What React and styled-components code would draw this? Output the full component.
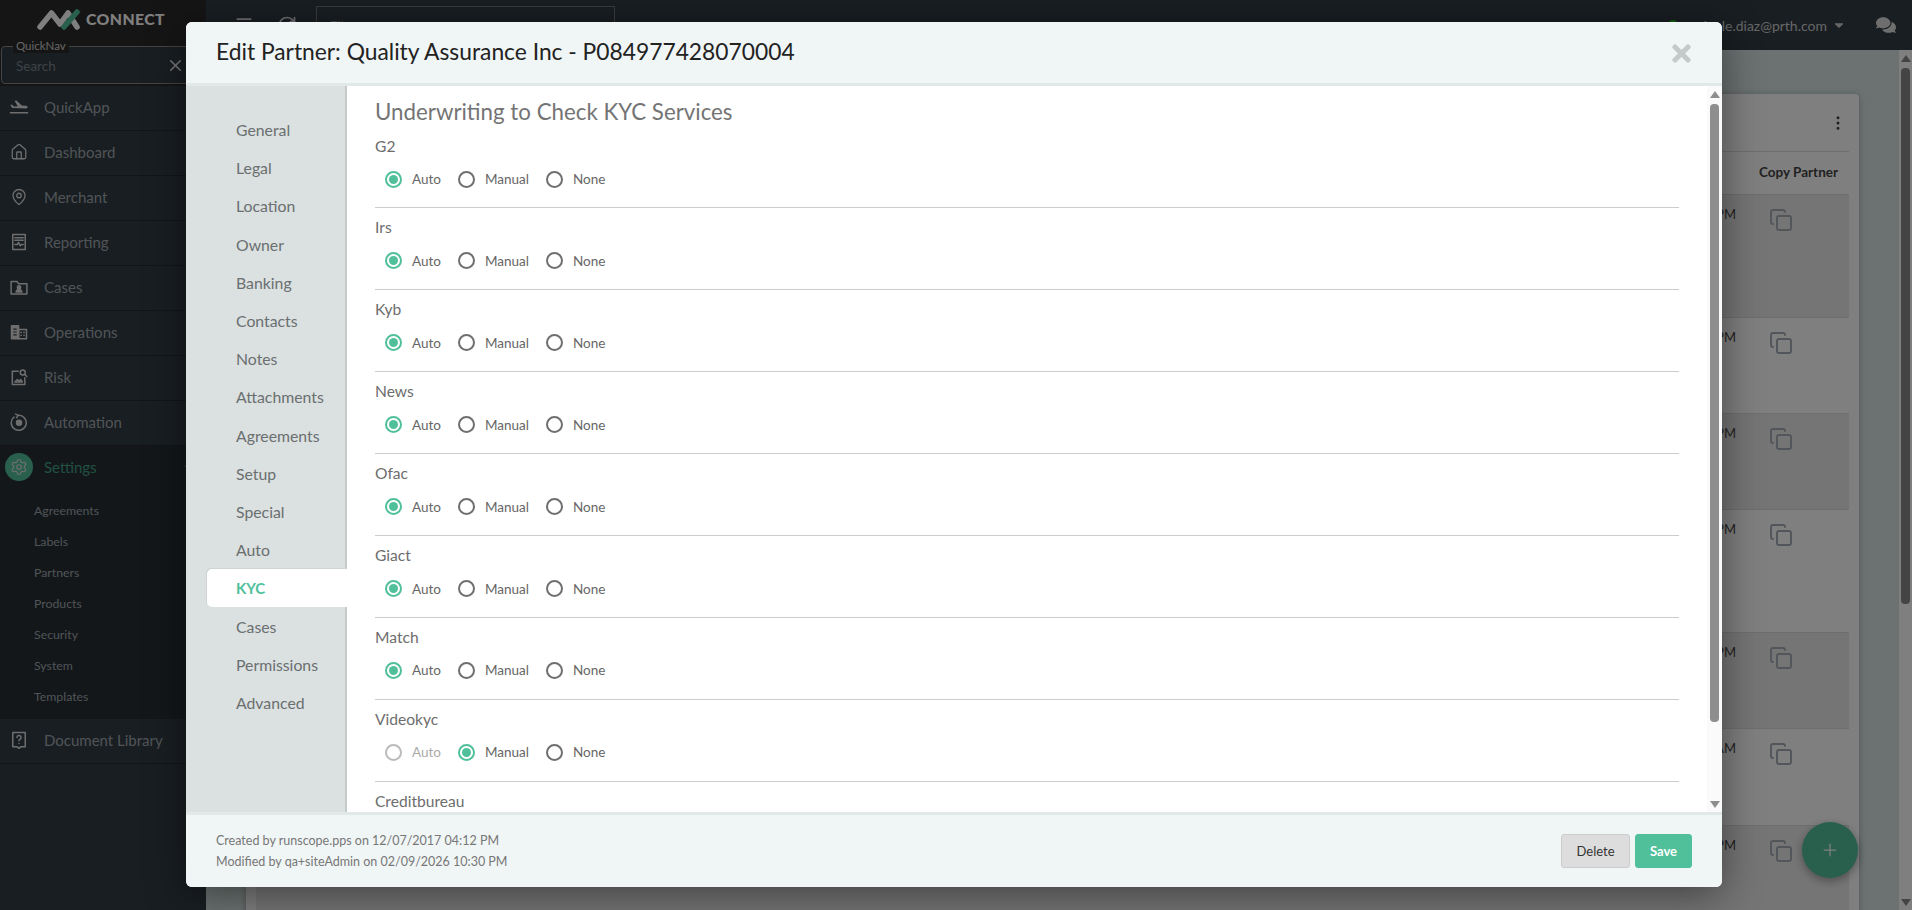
import React from 'react';
import styled, { createGlobalStyle } from 'styled-components';
import {
  Home, MapPin, Settings, ChevronLeft, ChevronDown, X, Copy, MoreVertical, Menu, RefreshCw, Plus,
} from 'lucide-react';
import { FaTimes, FaComments, FaCaretDown } from 'react-icons/fa';

const FONT = `"Lato", "Open Sans", "Liberation Sans", sans-serif`;

const Global = createGlobalStyle`
  html, body { margin: 0; padding: 0; height: 100%; overflow: hidden; }
  body { font-family: ${FONT}; background: #d6e4e2; }
  * { box-sizing: border-box; }
`;

const Page = styled.div`
  display: flex;
  width: 100%;
  height: 100vh;
  overflow: hidden;
  position: relative;
`;

/* ---------- sidebar ---------- */
const Sidebar = styled.aside`
  width: 206px;
  flex: none;
  background: #323c44;
  display: flex;
  flex-direction: column;
`;
const SideTop = styled.div`
  height: 86px;
  background: #2a2a2a;
  display: flex;
  flex-direction: column;
`;
const LogoRow = styled.div`
  height: 46px;
  padding: 9px 0 0 37px;
  display: flex;
  align-items: flex-start;
  gap: 6px;
`;
const LogoText = styled.span`
  font-size: 15.8px;
  font-weight: 900;
  color: #fff;
  letter-spacing: 0.4px;
  line-height: 22px;
  margin-top: -1px;
`;
const QuickNav = styled.div`
  position: relative;
  margin-left: 1px;
  height: 38px;
  border: 1px solid #888;
  border-radius: 4px;
  display: flex;
  align-items: center;
  justify-content: space-between;
  padding: 1px 6px 0 14px;
  background: #323c44;
`;
const QuickLabel = styled.span`
  position: absolute;
  top: -8px;
  left: 11px;
  padding: 0 3px;
  background: #2a2a2a;
  color: #ccc;
  font-size: 11.5px;
  line-height: 14px;
`;
const Placeholder = styled.span`
  font-size: 13.5px;
  color: #7c868c;
`;
const MenuRow = styled.div`
  height: 45px;
  flex: none;
  display: flex;
  align-items: center;
  padding-bottom: 2px;
  border-bottom: 1px solid ${p => (p.$open ? 'transparent' : '#262b30')};
  background: ${p => (p.$open ? '#262e34' : 'transparent')};
  position: relative;
`;
const IconSlot = styled.span`
  width: 44px;
  flex: none;
  display: flex;
  align-items: center;
  justify-content: center;
  padding-right: 6px;
  color: #ddd;
`;
const SettingsDisc = styled.span`
  width: 28px;
  height: 28px;
  border-radius: 50%;
  background: #50c09b;
  display: flex;
  align-items: center;
  justify-content: center;
  color: #ddd;
`;
const MenuText = styled.span`
  font-size: 15px;
  color: ${p => (p.$open ? '#44a083' : '#a0a8ae')};
`;
const Chevron = styled.span`
  margin-left: auto;
  width: 24px;
  display: flex;
  color: ${p => (p.$open ? '#44a083' : '#a0a8ae')};
`;
const SubList = styled.div`
  background: #262e34;
  height: 228px;
  padding-top: 4px;
  display: flex;
  flex-direction: column;
`;
const SubItem = styled.div`
  height: 31px;
  flex: none;
  display: flex;
  align-items: center;
  padding-left: 34px;
  font-size: 12.3px;
  color: #a0a8ae;
`;

/* ---------- main behind the dialog ---------- */
const Main = styled.div`
  flex: 1;
  min-width: 0;
  display: flex;
  flex-direction: column;
`;
const TopBar = styled.header`
  height: 50px;
  flex: none;
  background: #323c44;
  display: flex;
  align-items: flex-start;
  padding: 6px 16px 0 28px;
  color: #ddd;
`;
const TopIcon = styled.span`
  display: flex;
  margin: 9px ${p => p.$gap}px 0 0;
`;
const FilterBox = styled.div`
  width: 299px;
  height: 38px;
  border: 1px solid #777;
  padding: 11px 13px;
  font-size: 13px;
  color: #999;
`;
const UserArea = styled.div`
  margin-left: auto;
  display: flex;
  align-items: center;
  height: 38px;
  gap: 8px;
`;
const Presence = styled.span`
  width: 10px;
  height: 10px;
  border-radius: 50%;
  background: #1fc01f;
`;
const UserEmail = styled.span`
  font-size: 14px;
  color: #ccc;
  margin-right: -3px;
`;
const Below = styled.div`
  flex: 1;
  min-height: 0;
  display: flex;
`;
const Content = styled.main`
  flex: 1;
  min-width: 0;
  padding: 44px 40px 0;
  position: relative;
  overflow: hidden;
`;
const Card = styled.section`
  background: #fff;
  border-radius: 4px 4px 0 0;
  padding: 0 10px;
  height: 900px;
  box-shadow: 0 1px 6px rgba(0, 0, 0, 0.25);
`;
const CardHead = styled.div`
  height: 58px;
  border-bottom: 1px solid #ddd;
  display: flex;
  align-items: center;
  justify-content: flex-end;
  padding-right: 2px;
  color: #444;
`;
const TableHead = styled.div`
  height: 42px;
  display: flex;
  align-items: center;
  justify-content: flex-end;
  font-size: 13.5px;
  font-weight: 700;
  color: #444;
  padding: 0 11px 2px 0;
`;
const Row = styled.div`
  height: ${p => p.$h}px;
  background: ${p => (p.$shaded ? '#ebebeb' : '#fff')};
  border-top: 1px solid #ddd;
  display: flex;
  justify-content: flex-end;
`;
const DateCell = styled.div`
  padding-top: 11px;
  font-size: 13px;
  color: #444;
  line-height: 16px;
  margin-right: 23px;
`;
const CopyCell = styled.div`
  width: 90px;
  padding: 13px 0 0 10px;
  color: #a4acb6;
`;
const Fab = styled.button`
  position: absolute;
  right: 41px;
  bottom: 32px;
  width: 56px;
  height: 56px;
  border: 0;
  border-radius: 50%;
  background: #50c09b;
  color: #fff;
  display: flex;
  align-items: center;
  justify-content: center;
  box-shadow: 0 3px 10px rgba(0, 0, 0, 0.35);
`;

/* ---------- scrollbars ---------- */
const Track = styled.div`
  width: ${p => p.$w}px;
  flex: none;
  background: ${p => p.$bg};
  display: flex;
  flex-direction: column;
  align-items: center;
  padding: 5px 0 4px;
`;
const ArrowUp = styled.span`
  width: 0;
  height: 0;
  border-left: 5px solid transparent;
  border-right: 5px solid transparent;
  border-bottom: 7px solid ${p => p.$c};
`;
const ArrowDown = styled.span`
  margin-top: auto;
  width: 0;
  height: 0;
  border-left: 5px solid transparent;
  border-right: 5px solid transparent;
  border-top: 7px solid ${p => p.$c};
`;
const Thumb = styled.span`
  width: 9px;
  height: ${p => p.$h}px;
  margin-top: 6px;
  border-radius: 4px;
  background: ${p => p.$c};
`;

/* ---------- dialog ---------- */
const Backdrop = styled.div`
  position: absolute;
  inset: 0;
  background: rgba(0, 0, 0, 0.5);
`;
const DialogShadow = styled.div`
  position: absolute;
  left: 186px;
  top: 22px;
  width: 1536px;
  height: 865px;
  border-radius: 6px;
  box-shadow: 0 8px 40px rgba(0, 0, 0, 0.45);
`;
const Dialog = styled.div`
  position: absolute;
  left: 186px;
  top: 22px;
  width: 1536px;
  height: 865px;
  border-radius: 6px;
  overflow: hidden;
  background: #fff;
  display: flex;
  flex-direction: column;
`;
const DialogHead = styled.div`
  height: 64px;
  flex: none;
  background: #f0f5f5;
  border-bottom: 3px solid #e1e9e8;
  display: flex;
  align-items: center;
  justify-content: space-between;
  padding: 0 27px 3px 30px;
`;
const DialogTitle = styled.h1`
  margin: 0;
  font-size: 22.8px;
  font-weight: 400;
  color: #222;
`;
const CloseBtn = styled.span`
  display: flex;
  color: #c5c9c9;
  margin-top: 4px;
`;
const DialogBody = styled.div`
  flex: 1;
  min-height: 0;
  display: flex;
`;
const SideNav = styled.nav`
  width: 161px;
  flex: none;
  background: #dbe0e0;
  border-right: 2px solid #c5caca;
  padding-top: 24.5px;
  display: flex;
  flex-direction: column;
`;
const NavItem = styled.div`
  height: 38.2px;
  flex: none;
  display: flex;
  align-items: center;
  font-size: ${p => (p.$active ? '15px' : '15.8px')};
  padding-left: ${p => (p.$active ? '29px' : '50px')};
  margin-left: ${p => (p.$active ? '21px' : '0')};
  margin-right: ${p => (p.$active ? '-2px' : '0')};
  color: ${p => (p.$active ? '#50c09b' : '#6a6f70')};
  font-weight: ${p => (p.$active ? 700 : 400)};
  background: ${p => (p.$active ? '#fff' : 'transparent')};
  border-radius: ${p => (p.$active ? '5px 0 0 5px' : '0')};
  box-shadow: ${p => (p.$active ? '-1px -1px 0 #cfd4d4' : 'none')};
  position: relative;
`;
const Pane = styled.div`
  flex: 1;
  min-width: 0;
  overflow: hidden;
  padding: 10px 28px 0;
`;
const PaneTitle = styled.h2`
  margin: 0;
  height: 30.6px;
  font-size: 22.3px;
  line-height: 32px;
  font-weight: 400;
  color: #747474;
`;
const Service = styled.div`
  height: 81.9px;
  flex: none;
  border-bottom: 1px solid #ccc;
`;
const ServiceName = styled.div`
  height: 39px;
  line-height: 39px;
  font-size: 15.6px;
  color: #6d6d6d;
`;
const RadioLine = styled.div`
  display: flex;
  align-items: center;
  height: 27px;
  padding-left: 10px;
`;
const RadioOption = styled.label`
  display: flex;
  align-items: center;
  gap: 10px;
  margin-right: 17px;
  font-size: 13.5px;
  color: ${p => (p.$disabled ? '#aaa' : '#666')};
`;
const RadioMark = styled.span`
  width: 17px;
  height: 17px;
  border-radius: 50%;
  flex: none;
  display: flex;
  align-items: center;
  justify-content: center;
  border: 2px solid ${p => (p.$checked ? '#50c09b' : p.$disabled ? '#bbb' : '#6f6f6f')};
  &::after {
    content: '';
    width: 9px;
    height: 9px;
    border-radius: 50%;
    background: ${p => (p.$checked ? '#50c09b' : 'transparent')};
  }
`;
const DialogFoot = styled.div`
  height: 75px;
  flex: none;
  background: #f0f5f5;
  border-top: 3px solid #e1e9e8;
  display: flex;
  align-items: center;
  justify-content: space-between;
  padding: 0 30px;
`;
const Audit = styled.div`
  font-size: 12.5px;
  line-height: 21px;
  color: #777;
`;
const Buttons = styled.div`
  display: flex;
  gap: 5px;
`;
const Btn = styled.button`
  height: 34px;
  width: ${p => p.$w}px;
  border-radius: 3px;
  font-family: ${FONT};
  font-size: 13px;
  border: 1px solid ${p => (p.$primary ? '#50c09b' : '#ccc')};
  background: ${p => (p.$primary ? '#50c09b' : '#ddd')};
  color: ${p => (p.$primary ? '#fff' : '#333')};
  font-weight: ${p => (p.$primary ? 700 : 400)};
`;

/* ---------- drawn icons ---------- */
const Svg = ({ children, size = 20 }) => (
  <svg width={size} height={size} viewBox="0 0 24 24" fill="none" stroke="currentColor" strokeWidth="1.8" strokeLinecap="round" strokeLinejoin="round">
    {children}
  </svg>
);
const PlaneIcon = () => (
  <svg width="20" height="20" viewBox="0 0 24 24" fill="currentColor">
    <path d="M1.5 9.5l2-.6 2.6 2.4 4.3-.2L6.6 4.6l2.4-.4 6.4 6 5.2.4c1.2.1 1.9 1 1.8 1.8-.1.9-.9 1.4-2 1.3L3.8 13.2z" />
    <rect x="1" y="18" width="22" height="1.8" />
  </svg>
);
const ReportIcon = () => (
  <Svg>
    <rect x="4.5" y="3" width="15" height="18" />
    <path d="M7 7h10M7 10h10M7 15h3l1.5-2.5 2 4 1.5-1.5h2" />
  </Svg>
);
const CasesIcon = () => (
  <Svg>
    <path d="M2.5 5.5h7l2 2.5h10v12.5h-19z" />
    <circle cx="12" cy="12.5" r="2" fill="currentColor" />
    <path d="M8.5 18c.5-2 2-3 3.5-3s3 1 3.5 3z" fill="currentColor" />
  </Svg>
);
const OpsIcon = () => (
  <Svg>
    <rect x="3" y="4.5" width="8.5" height="15.5" fill="currentColor" />
    <rect x="11.5" y="9" width="9.5" height="11" />
    <path d="M14.5 12.5h.1M18 12.5h.1M14.5 16h.1M18 16h.1" strokeWidth="2" />
    <path d="M5.7 8.5h3M5.7 12h3M5.7 15.5h3" stroke="#323c44" strokeWidth="1.4" />
  </Svg>
);
const RiskIcon = () => (
  <Svg>
    <path d="M11 5H4v16h15v-8" />
    <circle cx="16.5" cy="6.5" r="3" />
    <path d="M19 9l2.5 2.5M7 18l3-3 2 2 2-2 2 3z" />
  </Svg>
);
const AutomationIcon = () => (
  <Svg>
    <path d="M6 6a9 9 0 1 0 5-2" />
    <path d="M8 2.5L11 4 9 7" />
    <circle cx="12" cy="13" r="3" fill="currentColor" />
  </Svg>
);
const DocIcon = () => (
  <Svg>
    <path d="M4.5 3h15v17h-5l-2.5 2-2.5-2h-5z" />
    <path d="M9.5 9a2.5 2.5 0 1 1 3.5 2.3c-.7.4-1 .9-1 1.7M12 16.2v.1" />
  </Svg>
);
const Logo = () => (
  <svg width="43" height="21" viewBox="0 0 43 21">
    <path d="M3 18 14.5 4 23 15 31 4l9 14" fill="none" stroke="#fff" strokeWidth="5.5" strokeLinejoin="round" strokeLinecap="round" />
    <path d="M27 18 40 3" fill="none" stroke="#50c09b" strokeWidth="5.5" strokeLinecap="round" />
  </svg>
);

/* ---------- data ---------- */
const MENU_TOP = [
  ['QuickApp', <PlaneIcon />, false],
  ['Dashboard', <Home size={18} strokeWidth={1.7} />, true],
  ['Merchant', <MapPin size={18} strokeWidth={1.7} />, true],
  ['Reporting', <ReportIcon />, true],
  ['Cases', <CasesIcon />, true],
  ['Operations', <OpsIcon />, true],
  ['Risk', <RiskIcon />, true],
  ['Automation', <AutomationIcon />, true],
];
const SUBS = ['Agreements', 'Labels', 'Partners', 'Products', 'Security', 'System', 'Templates'];
const NAV = ['General', 'Legal', 'Location', 'Owner', 'Banking', 'Contacts', 'Notes', 'Attachments', 'Agreements', 'Setup', 'Special', 'Auto', 'KYC', 'Cases', 'Permissions', 'Advanced'];
const SERVICES = ['G2', 'Irs', 'Kyb', 'News', 'Ofac', 'Giact', 'Match', 'Videokyc', 'Creditbureau'];
const ROWS = [
  [123, '10:30 PM'],
  [96, '02:44 PM'],
  [96, '06:12 PM'],
  [123, '04:51 PM'],
  [96, '03:07 PM'],
  [97, '09:26 AM'],
  [96, '01:33 PM'],
];

const Radio = ({ label, checked, disabled }) => (
  <RadioOption $disabled={disabled}>
    <RadioMark $checked={checked} $disabled={disabled} />
    {label}
  </RadioOption>
);

export default function App() {
  return (
    <Page>
      <Global />
      <Sidebar>
        <SideTop>
          <LogoRow>
            <Logo />
            <LogoText>CONNECT</LogoText>
          </LogoRow>
          <QuickNav>
            <QuickLabel>QuickNav</QuickLabel>
            <Placeholder>Search</Placeholder>
            <X size={19} color="#eee" style={{ marginRight: 14 }} />
          </QuickNav>
        </SideTop>
        {MENU_TOP.map(([t, icon, chev]) => (
          <MenuRow key={t}>
            <IconSlot>{icon}</IconSlot>
            <MenuText>{t}</MenuText>
            {chev && <Chevron><ChevronLeft size={12} /></Chevron>}
          </MenuRow>
        ))}
        <MenuRow $open>
          <IconSlot><SettingsDisc><Settings size={18} strokeWidth={1.6} /></SettingsDisc></IconSlot>
          <MenuText $open>Settings</MenuText>
          <Chevron $open><ChevronDown size={12} /></Chevron>
        </MenuRow>
        <SubList>
          {SUBS.map(s => <SubItem key={s}>{s}</SubItem>)}
        </SubList>
        <MenuRow>
          <IconSlot><DocIcon /></IconSlot>
          <MenuText>Document Library</MenuText>
          <Chevron><ChevronLeft size={12} /></Chevron>
        </MenuRow>
      </Sidebar>

      <Main>
        <TopBar>
          <TopIcon $gap={23}><Menu size={20} /></TopIcon>
          <TopIcon $gap={19}><RefreshCw size={20} /></TopIcon>
          <FilterBox>Filter</FilterBox>
          <UserArea>
            <Presence />
            <UserEmail>a.nicole.diaz@prth.com</UserEmail>
            <FaCaretDown size={14} color="#ccc" />
            <FaComments size={20} color="#ddd" style={{ marginLeft: 22 }} />
          </UserArea>
        </TopBar>
        <Below>
          <Content>
            <Card>
              <CardHead><MoreVertical size={18} /></CardHead>
              <TableHead>Copy Partner</TableHead>
              {ROWS.map(([h, d], i) => (
                <Row key={d} $h={h} $shaded={i % 2 === 0}>
                  <DateCell>{d}</DateCell>
                  <CopyCell><Copy size={24} strokeWidth={1.9} /></CopyCell>
                </Row>
              ))}
            </Card>
            <Fab><Plus size={20} strokeWidth={1.5} /></Fab>
          </Content>
          <Track $w={13} $bg="#fff">
            <ArrowUp $c="#888" />
            <Thumb $h={536} $c="#888" />
            <ArrowDown $c="#888" />
          </Track>
        </Below>
      </Main>

      <Backdrop />
      <DialogShadow />
      <Dialog>
        <DialogHead>
          <DialogTitle>Edit Partner: Quality Assurance Inc - P084977428070004</DialogTitle>
          <CloseBtn><FaTimes size={27} /></CloseBtn>
        </DialogHead>
        <DialogBody>
          <SideNav>
            {NAV.map(n => <NavItem key={n} $active={n === 'KYC'}>{n}</NavItem>)}
          </SideNav>
          <Pane>
            <PaneTitle>Underwriting to Check KYC Services</PaneTitle>
            {SERVICES.map((s, i) => {
              const video = s === 'Videokyc';
              const last = i === SERVICES.length - 1;
              return (
                <Service key={s}>
                  <ServiceName>{s}</ServiceName>
                  {!last && (
                    <RadioLine>
                      <Radio label="Auto" checked={!video} disabled={video} />
                      <Radio label="Manual" checked={video} />
                      <Radio label="None" />
                    </RadioLine>
                  )}
                </Service>
              );
            })}
          </Pane>
          <Track $w={15} $bg="#fafafa">
            <ArrowUp $c="#8e8e8e" />
            <Thumb $h={618} $c="#8e8e8e" />
            <ArrowDown $c="#8e8e8e" />
          </Track>
        </DialogBody>
        <DialogFoot>
          <Audit>
            Created by runscope.pps on 12/07/2017 04:12 PM<br />
            Modified by qa+siteAdmin on 02/09/2026 10:30 PM
          </Audit>
          <Buttons>
            <Btn $w={69}>Delete</Btn>
            <Btn $w={57} $primary>Save</Btn>
          </Buttons>
        </DialogFoot>
      </Dialog>
    </Page>
  );
}
